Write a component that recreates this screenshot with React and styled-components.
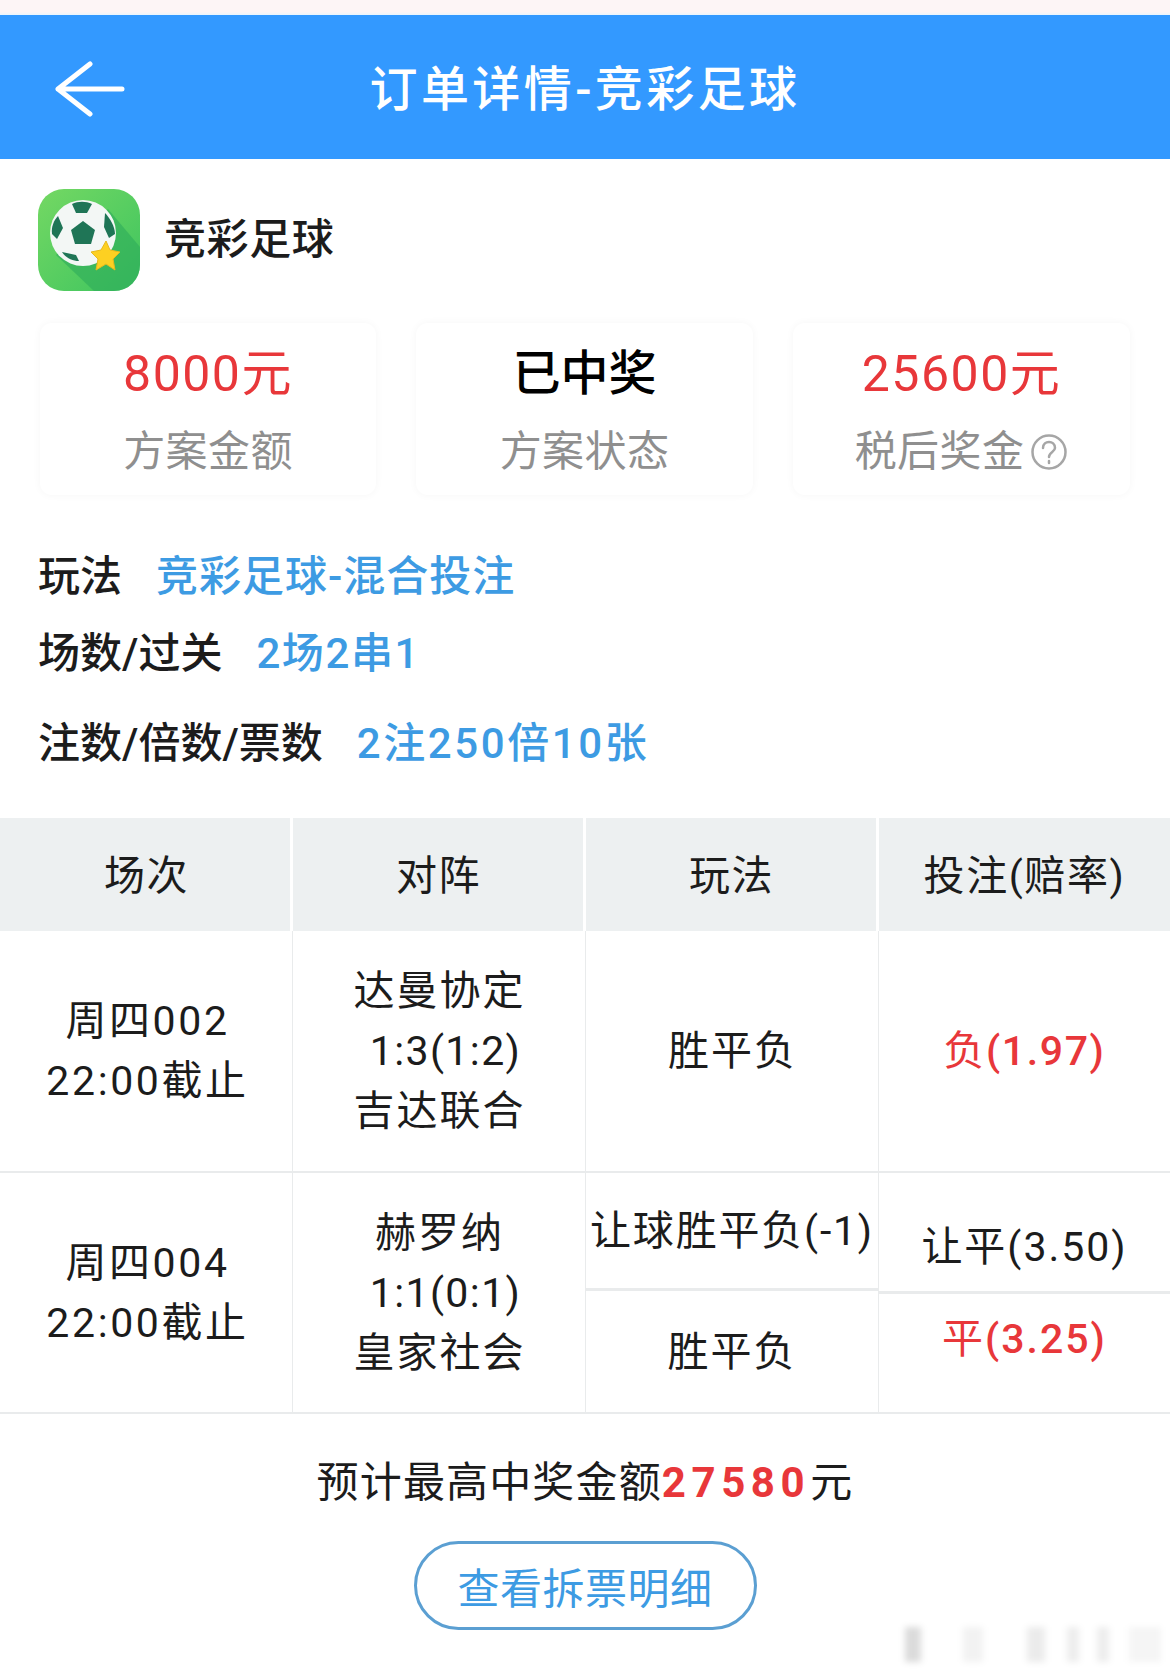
import React from 'react';
import styled, { createGlobalStyle } from 'styled-components';

const palette = {
  blue: '#3399ff',
  link: '#3d9be3',
  red: '#e8373a',
  ink: '#1c1c1c',
  grey: '#8f8f8f',
  line: '#e9ebec',
  head: '#edf0f1',
};

const GlobalStyle = createGlobalStyle`
  html, body { margin: 0; padding: 0; background: #fff; }
  body {
    font-family: Roboto, "Noto Sans CJK SC", "Noto Sans", sans-serif;
    color: ${palette.ink};
  }
`;

const Page = styled.div`
  position: relative;
  width: 1170px;
  height: 1673px;
  overflow: hidden;
  background: #fff;
`;

const TopStrip = styled.div`
  height: 15px;
  background: linear-gradient(#fdf5f6 0, #fdf5f6 12px, #eaf5fd 15px);
`;

const Header = styled.header`
  display: flex;
  align-items: center;
  justify-content: center;
  position: relative;
  height: 144px;
  background: ${palette.blue};
  color: #fff;
`;

const BackIcon = styled.svg`
  position: absolute;
  left: 55px;
  top: 46px;
  width: 70px;
  height: 56px;
`;

const Title = styled.h1`
  margin: -4px 0 0;
  font-size: 48px;
  font-weight: 500;
  letter-spacing: 3.4px;
`;

const AppRow = styled.div`
  display: flex;
  align-items: center;
  gap: 24px;
  padding: 30px 38px 0;
`;

const AppIcon = styled.svg`
  width: 102px;
  height: 102px;
  flex: none;
`;

const AppName = styled.div`
  font-size: 42px;
  font-weight: 500;
  letter-spacing: 0.6px;
  line-height: 102px;
`;

const Stats = styled.div`
  display: grid;
  grid-template-columns: 336px 337px 337px;
  gap: 40px;
  padding: 32px 40px 0;
`;

const StatCard = styled.div`
  display: flex;
  flex-direction: column;
  align-items: center;
  height: 172px;
  padding-top: 21px;
  box-sizing: border-box;
  border-radius: 12px;
  box-shadow: 0 0 8px rgba(0, 0, 0, 0.04);
`;

const StatValue = styled.div`
  font-size: ${(p) => (p.$black ? 48 : 50)}px;
  line-height: 60px;
  font-weight: ${(p) => (p.$black ? 500 : 400)};
  color: ${(p) => (p.$black ? '#000' : palette.red)};
  letter-spacing: ${(p) => (p.$black ? 0 : '1.5px')};
`;

const StatLabel = styled.div`
  display: flex;
  align-items: center;
  margin-top: 18px;
  font-size: 42px;
  letter-spacing: 0.4px;
  line-height: 60px;
  color: ${palette.grey};
`;

const HelpIcon = styled.svg`
  width: 38px;
  height: 38px;
  margin-left: 6px;
`;

const InfoList = styled.div`
  padding: 52px 38px 0;
`;

const InfoRow = styled.div`
  display: flex;
  gap: ${(p) => p.$gap || 34}px;
  height: ${(p) => p.$h}px;
  align-items: flex-start;
  font-size: 42px;
  line-height: 60px;
  font-weight: 500;
  white-space: nowrap;
`;

const InfoValue = styled.span`
  color: ${palette.link};
  letter-spacing: ${(p) => p.$spacing || 0}px;
`;

const Table = styled.div`
  display: grid;
  grid-template-columns: 293px 293px 293px 291px;
  grid-template-rows: 113px 242px 239px;
  margin-top: 44px;
  border-bottom: 2px solid ${palette.line};
`;

const HeadCell = styled.div`
  display: flex;
  align-items: center;
  justify-content: center;
  padding-bottom: 6px;
  padding-left: ${(p) => p.$nudge || 0}px;
  background: ${palette.head};
  border-right: ${(p) => (p.$last ? 0 : '3px solid #fff')};
  font-size: 41px;
  letter-spacing: 1.6px;
  white-space: nowrap;
`;

const Cell = styled.div`
  display: flex;
  flex-direction: column;
  align-items: center;
  justify-content: center;
  padding-left: ${(p) => p.$nudge || 0}px;
  border-right: ${(p) => (p.$last ? 0 : `1px solid ${palette.line}`)};
  border-bottom: ${(p) => (p.$end ? 0 : `2px solid ${palette.line}`)};
  font-size: 41px;
  line-height: 60px;
  letter-spacing: ${(p) => p.$spacing ?? 2}px;
  text-align: center;
  white-space: nowrap;
  color: ${(p) => (p.$red ? palette.red : palette.ink)};
`;

const Score = styled.span`
  padding-left: 12px;
  letter-spacing: 1.4px;
`;

const SplitCell = styled.div`
  display: grid;
  grid-template-rows: ${(p) => p.$rows};
  border-right: ${(p) => (p.$last ? 0 : `1px solid ${palette.line}`)};
`;

const SubCell = styled.div`
  display: flex;
  align-items: ${(p) => p.$align || 'center'};
  justify-content: center;
  padding: ${(p) => p.$pad || 0};
  border-top: ${(p) => (p.$divider ? `3px solid ${palette.line}` : 0)};
  font-size: 41px;
  line-height: 60px;
  letter-spacing: ${(p) => p.$spacing ?? 2}px;
  white-space: nowrap;
  color: ${(p) => (p.$red ? palette.red : palette.ink)};
`;

const Odds = styled.b`
  font-weight: 500;
`;

const Footer = styled.div`
  display: flex;
  flex-direction: column;
  align-items: center;
  padding-top: 39px;
`;

const Estimate = styled.div`
  font-size: 42px;
  line-height: 60px;
  letter-spacing: 1.15px;
  white-space: nowrap;
`;

const EstimateAmount = styled.span`
  color: ${palette.red};
  font-weight: 700;
  letter-spacing: 5.6px;
`;

const DetailButton = styled.button`
  width: 343px;
  height: 89px;
  margin-top: 28px;
  padding: 0;
  background: #fff;
  border: 3px solid #5b9fd2;
  border-radius: 45px;
  font: inherit;
  font-size: 42px;
  letter-spacing: 0.5px;
  color: ${palette.link};
`;

const Watermark = styled.div`
  position: absolute;
  left: 905px;
  top: 1627px;
  width: 256px;
  height: 35px;
  filter: blur(3px);
  background: linear-gradient(
    90deg,
    rgba(0, 0, 0, 0.14) 0 14px,
    transparent 18px 56px,
    rgba(0, 0, 0, 0.05) 60px 76px,
    transparent 80px 120px,
    rgba(0, 0, 0, 0.08) 124px 138px,
    transparent 142px 160px,
    rgba(0, 0, 0, 0.07) 164px 172px,
    transparent 176px 190px,
    rgba(0, 0, 0, 0.07) 194px 202px,
    transparent 206px 222px,
    rgba(0, 0, 0, 0.04) 226px 254px
  );
`;

function BallLogo() {
  return (
    <AppIcon viewBox="0 0 102 102">
      <defs>
        <linearGradient id="tile" x1="0" y1="0" x2="1" y2="1">
          <stop offset="0" stopColor="#74d863" />
          <stop offset="1" stopColor="#3dc45f" />
        </linearGradient>
        <clipPath id="tileClip">
          <rect width="102" height="102" rx="26" />
        </clipPath>
      </defs>
      <rect width="102" height="102" rx="26" fill="url(#tile)" />
      <path d="M70 20 L102 58 V102 H56 L18 66 Z" fill="#2fae5a" opacity="0.65" clipPath="url(#tileClip)" />
      <circle cx="45" cy="44" r="33" fill="#f3f7f5" />
      <path d="M45 32 L57 41 L53 55 L37 55 L33 41 Z" fill="#1f7556" />
      <path d="M34 15 C40 12 48 12 54 15 L49 24 L38 24 Z" fill="#1f7556" />
      <path d="M67 24 C72 29 77 38 77 45 L71 49 L66 38 Z" fill="#1f7556" />
      <path d="M20 27 L25 39 L19 50 L14 45 C13 38 16 31 20 27 Z" fill="#1f7556" />
      <path d="M24 63 L38 66 L41 72 C34 72 28 69 24 63 Z" fill="#1f7556" />
      <path d="M68 52 L72 61 L82 63 L75 70 L77 81 L68 75 L58 81 L60 70 L53 63 L63 61 Z" fill="#fdd022" stroke="#e8b91c" strokeWidth="1" />
    </AppIcon>
  );
}

export default function App() {
  return (
    <Page>
      <GlobalStyle />
      <TopStrip />
      <Header>
        <BackIcon viewBox="0 0 70 56" fill="none" stroke="#fff" strokeWidth="5" strokeLinecap="round" strokeLinejoin="round">
          <path d="M67 28 H3 M35 3 L3 28 L35 53" />
        </BackIcon>
        <Title>订单详情-竞彩足球</Title>
      </Header>

      <AppRow>
        <BallLogo />
        <AppName>竞彩足球</AppName>
      </AppRow>

      <Stats>
        <StatCard>
          <StatValue>8000元</StatValue>
          <StatLabel>方案金额</StatLabel>
        </StatCard>
        <StatCard>
          <StatValue $black>已中奖</StatValue>
          <StatLabel>方案状态</StatLabel>
        </StatCard>
        <StatCard>
          <StatValue>25600元</StatValue>
          <StatLabel>
            税后奖金
            <HelpIcon viewBox="0 0 38 38" fill="none" stroke="#a6a6a6" strokeWidth="2.5">
              <circle cx="19" cy="19" r="16.5" />
              <path d="M13 15 C13 7 25 7 25 15 C25 19 19 19 19 24" strokeLinecap="round" />
              <path d="M19 28 V30" strokeLinecap="round" />
            </HelpIcon>
          </StatLabel>
        </StatCard>
      </Stats>

      <InfoList>
        <InfoRow $h={77}>玩法<InfoValue $spacing={1}>竞彩足球-混合投注</InfoValue></InfoRow>
        <InfoRow $h={90}>场数/过关<InfoValue $spacing={1.6}>2场2串1</InfoValue></InfoRow>
        <InfoRow $h={60}>注数/倍数/票数<InfoValue $spacing={2.6}>2注250倍10张</InfoValue></InfoRow>
      </InfoList>

      <Table>
        <HeadCell $nudge={3}>场次</HeadCell>
        <HeadCell $nudge={1}>对阵</HeadCell>
        <HeadCell $nudge={1}>玩法</HeadCell>
        <HeadCell $last>投注(赔率)</HeadCell>

        <Cell $nudge={3} $spacing={2.6}><span>周四002</span><span>22:00截止</span></Cell>
        <Cell $nudge={1}><span>达曼协定</span><Score>1:3(1:2)</Score><span>吉达联合</span></Cell>
        <Cell $nudge={1}>胜平负</Cell>
        <Cell $last $red $spacing={1.6}><span>负<Odds>(1.97)</Odds></span></Cell>

        <Cell $end $nudge={3} $spacing={2.6}><span>周四004</span><span>22:00截止</span></Cell>
        <Cell $end $nudge={1}><span>赫罗纳</span><Score>1:1(0:1)</Score><span>皇家社会</span></Cell>
        <SplitCell $rows="115px 124px">
          <SubCell $align="flex-start" $pad="28px 0 0" $spacing={1.8}>让球胜平负(-1)</SubCell>
          <SubCell $divider>胜平负</SubCell>
        </SplitCell>
        <SplitCell $last $rows="118px 121px">
          <SubCell $align="flex-start" $pad="44px 0 0">让平(3.50)</SubCell>
          <SubCell $divider $red $align="flex-start" $pad="15px 0 0"><span>平<Odds>(3.25)</Odds></span></SubCell>
        </SplitCell>
      </Table>

      <Footer>
        <Estimate>预计最高中奖金额<EstimateAmount>27580</EstimateAmount>元</Estimate>
        <DetailButton>查看拆票明细</DetailButton>
      </Footer>

      <Watermark />
    </Page>
  );
}
